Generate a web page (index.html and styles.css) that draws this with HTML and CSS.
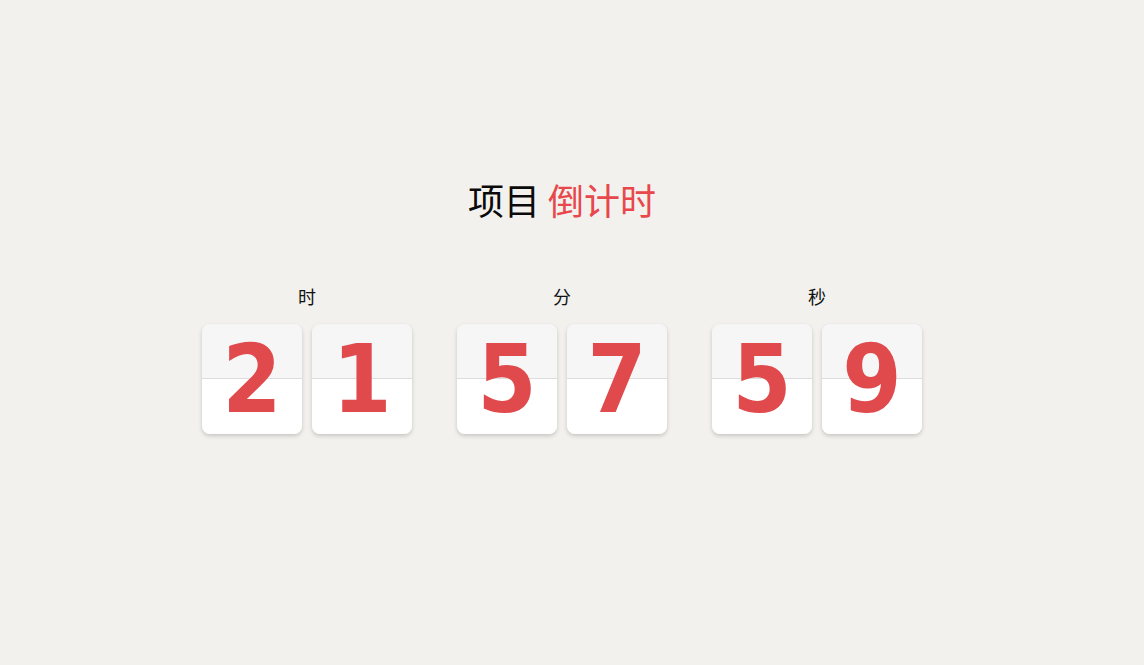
FILE: index.html
```html
<!DOCTYPE html>
<html lang="zh-CN">
<head>
<meta charset="utf-8">
<title>项目倒计时</title>
<link rel="stylesheet" href="styles.css">
</head>
<body>
<main class="page">
  <h1 class="title">项目 <span class="accent">倒计时</span></h1>
  <div class="clock">
    <section class="unit">
      <div class="unit-label">时</div>
      <div class="digits">
        <div class="card">2</div>
        <div class="card">1</div>
      </div>
    </section>
    <section class="unit">
      <div class="unit-label">分</div>
      <div class="digits">
        <div class="card">5</div>
        <div class="card">7</div>
      </div>
    </section>
    <section class="unit">
      <div class="unit-label">秒</div>
      <div class="digits">
        <div class="card">5</div>
        <div class="card">9</div>
      </div>
    </section>
  </div>
</main>
</body>
</html>
```
FILE: styles.css
```css
html, body {
  margin: 0;
  height: 100%;
}

body {
  background: #f2f1ee;
  font-family: "Noto Sans CJK SC", "Noto Sans", sans-serif;
  color: #111;
}

.page {
  display: flex;
  flex-direction: column;
  align-items: center;
  padding-top: 178px;
  padding-right: 20px;
}

.title {
  margin: 0;
  font-size: 36px;
  font-weight: 400;
  line-height: 43px;
  color: #0a0a0a;
}

.title .accent {
  color: #e8474b;
}

.clock {
  display: flex;
  gap: 45px;
  margin-top: 63px;
}

.unit {
  display: flex;
  flex-direction: column;
  align-items: center;
}

.unit-label {
  font-size: 18px;
  line-height: 24px;
  color: #111;
}

.digits {
  display: flex;
  gap: 10px;
  margin-top: 16px;
}

.card {
  width: 100px;
  height: 110px;
  border-radius: 8px;
  background: linear-gradient(#f6f6f7 0 54px, #dcdcdc 54px 55px, #ffffff 55px);
  box-shadow: 0 2px 4px rgba(0, 0, 0, 0.18);
  display: flex;
  align-items: center;
  justify-content: center;
  font-family: "DejaVu Sans Condensed", "DejaVu Sans", sans-serif;
  font-weight: 700;
  font-size: 95px;
  line-height: 110px;
  color: #e04a4d;
}
```
